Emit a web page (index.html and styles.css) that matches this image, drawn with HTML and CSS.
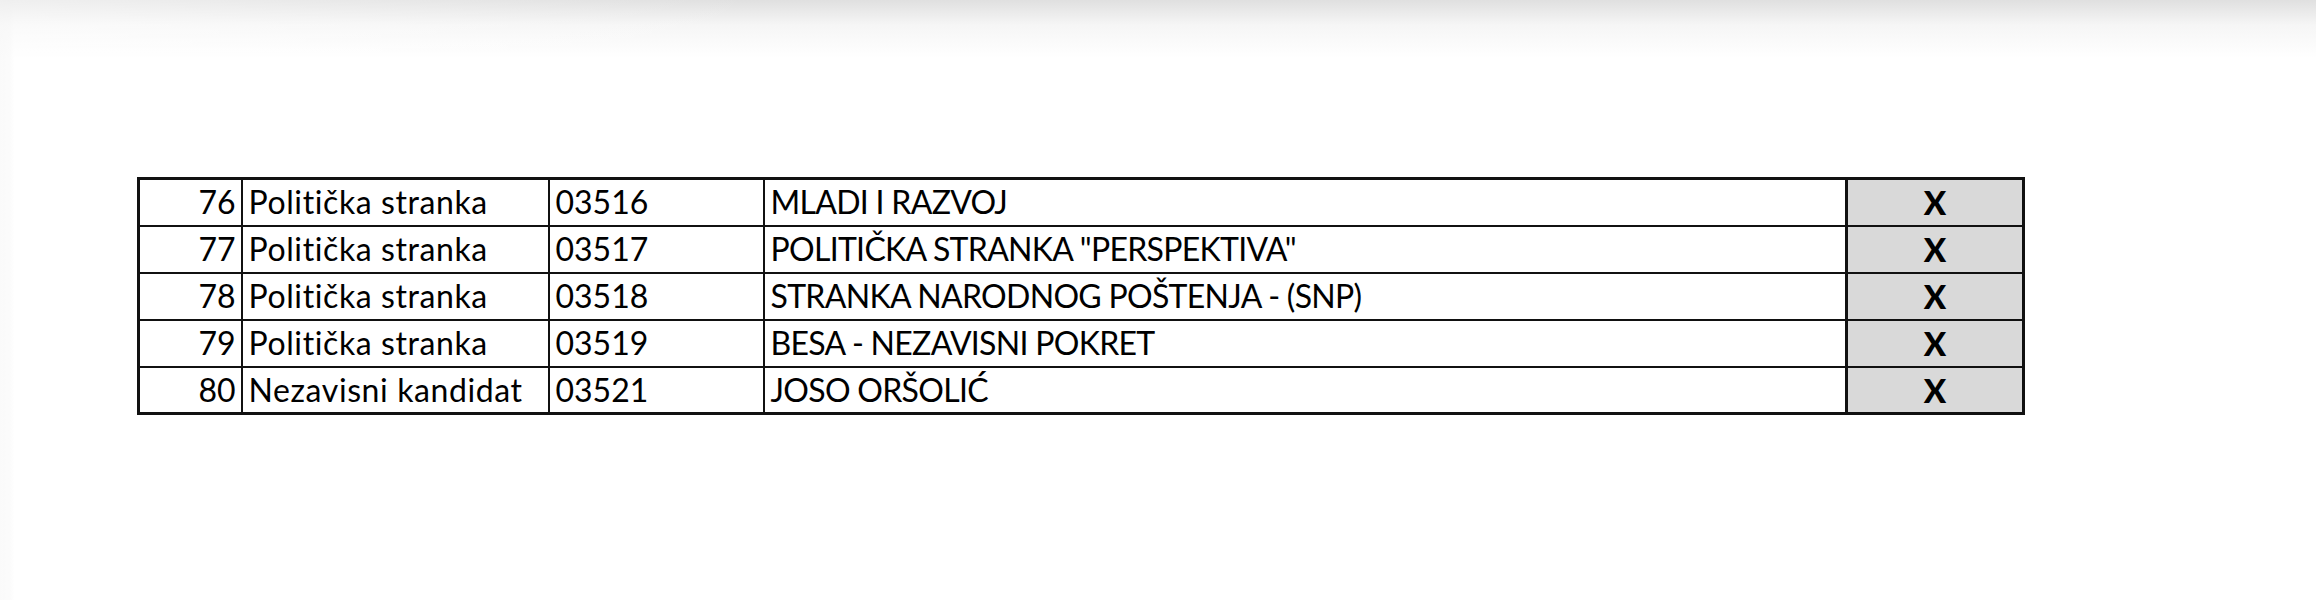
FILE: index.html
```html
<!DOCTYPE html>
<html lang="bs">
<head>
<meta charset="utf-8">
<title>Lista</title>
<link rel="stylesheet" href="styles.css">
</head>
<body>
<div class="page">
  <table class="sheet">
    <colgroup>
      <col class="c-num">
      <col class="c-type">
      <col class="c-code">
      <col class="c-name">
      <col class="c-mark">
    </colgroup>
    <tbody>
      <tr><td class="num">76</td><td class="type">Politička stranka</td><td>03516</td><td class="name">MLADI I RAZVOJ</td><td class="mark">X</td></tr>
      <tr><td class="num">77</td><td class="type">Politička stranka</td><td>03517</td><td class="name">POLITIČKA STRANKA "PERSPEKTIVA"</td><td class="mark">X</td></tr>
      <tr><td class="num">78</td><td class="type">Politička stranka</td><td>03518</td><td class="name">STRANKA NARODNOG POŠTENJA - (SNP)</td><td class="mark">X</td></tr>
      <tr><td class="num">79</td><td class="type">Politička stranka</td><td>03519</td><td class="name">BESA - NEZAVISNI POKRET</td><td class="mark">X</td></tr>
      <tr><td class="num">80</td><td class="type">Nezavisni kandidat</td><td>03521</td><td class="name">JOSO ORŠOLIĆ</td><td class="mark">X</td></tr>
    </tbody>
  </table>
</div>
</body>
</html>
```

FILE: styles.css
```css
html, body {
  margin: 0;
  padding: 0;
}
body {
  width: 2316px;
  height: 600px;
  overflow: hidden;
  background:
    linear-gradient(to right, rgba(255,255,255,0.5) 0, rgba(255,255,255,0) 760px),
    linear-gradient(to bottom, rgba(222,222,222,0.95) 0, rgba(238,238,238,0.55) 25px, rgba(255,255,255,0) 58px),
    linear-gradient(to right, #f5f5f5 0, #f8f8f8 10px, #ffffff 14px);
  font-family: Lato, "Open Sans", sans-serif;
  color: #000;
}
.page {
  padding: 177px 0 0 137px;
}
.sheet {
  table-layout: fixed;
  border-collapse: collapse;
  width: 1885px;
  border: 3px solid #111;
}
.c-num { width: 103px; }
.c-type { width: 307px; }
.c-code { width: 215px; }
.c-name { width: 1083px; }
.c-mark { width: 177px; }
.sheet td {
  box-sizing: border-box;
  height: 47px;
  border: 2.5px solid #111;
  padding: 0 0 0 6px;
  font-size: 32px;
  line-height: 36px;
  vertical-align: middle;
  white-space: nowrap;
  overflow: hidden;
}
.sheet td.type {
  letter-spacing: 0.6px;
}
.sheet td.name {
  letter-spacing: -0.7px;
}
.sheet td.num {
  text-align: right;
  padding: 0 5px 0 0;
}
.sheet td.mark {
  background: #d9d9d9;
  text-align: center;
  font-weight: 900;
  font-size: 33px;
  padding-left: 0;
  border-left-width: 3px;
}
```
